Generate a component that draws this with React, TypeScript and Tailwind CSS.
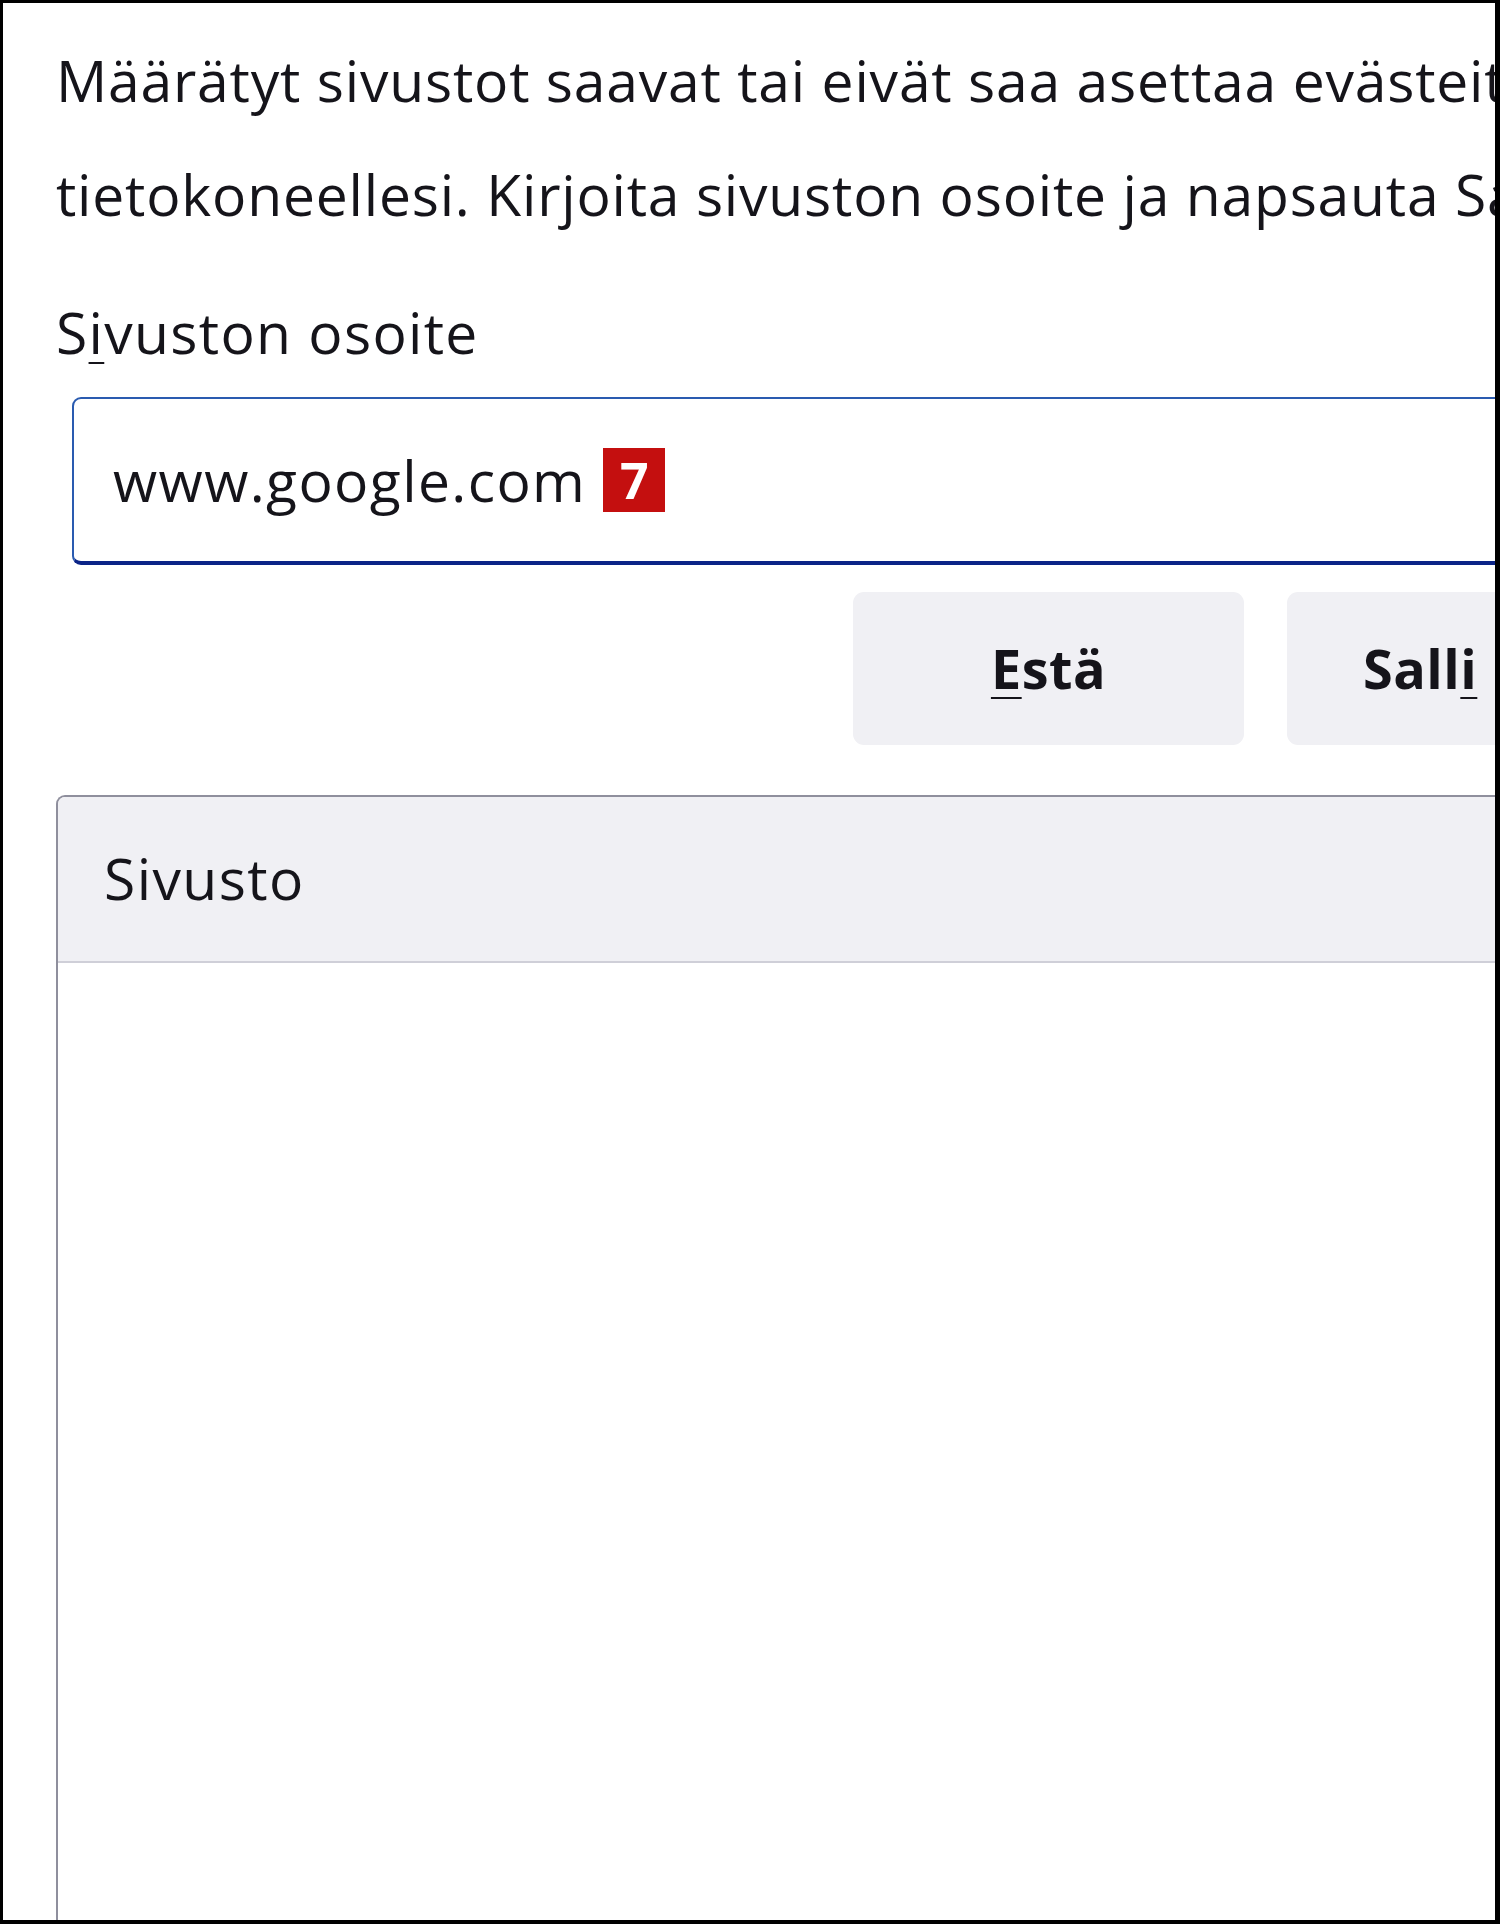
import React from 'react';

// Firefox "Exceptions - Cookies" dialog, zoomed and cropped
const font = { fontFamily: '"Open Sans", "Noto Sans", sans-serif' };

const App: React.FC = () => {
  return (
    <div
      className="w-[1500px] h-[1924px] overflow-hidden bg-white border-t-[3px] border-l-[3px] border-r-[5px] border-b-[4px] border-black text-[#15141a]"
      style={font}
    >
      <div className="w-[1900px] pl-[53px] pt-[20px] flex flex-col">
        <p className="text-[57px] leading-[114px] tracking-[0.8px]">
          <span className="block whitespace-nowrap">
            Määrätyt sivustot saavat tai eivät saa asettaa evästeitä tai sivustotietoja
          </span>
          <span className="block whitespace-nowrap">
            tietokoneellesi. Kirjoita sivuston osoite ja napsauta Salli tai Estä.
          </span>
        </p>

        <label className="mt-[42px] text-[57px] leading-[78px] tracking-[1.3px] whitespace-nowrap">
          S<span className="underline underline-offset-[8px] decoration-[2px]">i</span>vuston osoite
        </label>

        <div className="mt-[26px] ml-[16px] h-[168px] w-[1700px] flex items-center gap-[17px] pl-[39px] rounded-[9px] border-[2px] border-b-[4px] border-[#2a5bb0] border-b-[#0b2487]">
          <span className="text-[57px] leading-none tracking-[1.4px]">www.google.com</span>
          <span className="w-[62px] h-[64px] flex items-center justify-center bg-[#c40f0f] text-white font-bold text-[50px] leading-none">
            7
          </span>
        </div>

        <div className="mt-[27px] flex gap-[43px] pl-[797px]">
          <button className="w-[391px] h-[153px] rounded-[11px] bg-[#f0f0f4] font-bold text-[54px] tracking-[0.5px]">
            <span className="underline underline-offset-[8px] decoration-[2px]">E</span>stä
          </button>
          <button className="h-[153px] pl-[76px] pr-[200px] rounded-[11px] bg-[#f0f0f4] font-bold text-[54px] tracking-[0.5px] whitespace-nowrap">
            Sall<span className="underline underline-offset-[8px] decoration-[2px]">i</span>
          </button>
        </div>

        <div className="mt-[50px] w-[1700px] h-[1200px] rounded-tl-[9px] border-t-[2px] border-l-[2px] border-[#8f8f9d] overflow-hidden">
          <div className="h-[166px] flex items-center pl-[46px] bg-[#f0f0f4] border-b-[2px] border-[#cfcfd8] text-[57px] tracking-[1.4px]">
            Sivusto
          </div>
        </div>
      </div>
    </div>
  );
};

export default App;
